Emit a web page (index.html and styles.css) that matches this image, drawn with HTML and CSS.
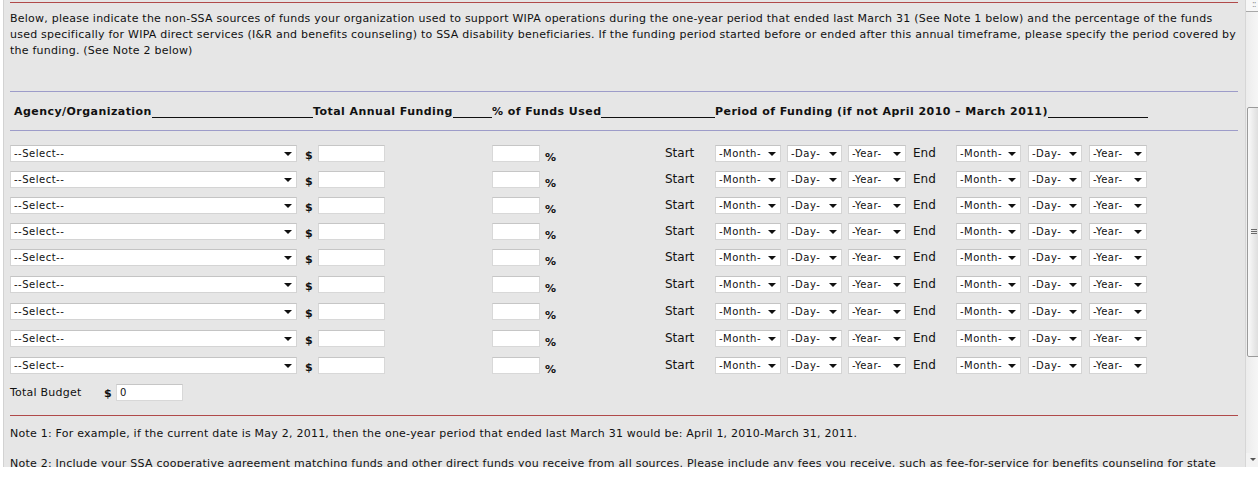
FILE: index.html
```html
<!DOCTYPE html>
<html>
<head>
<meta charset="utf-8">
<link rel="stylesheet" href="styles.css">
</head>
<body>
<div class="page">
  <div class="content">
    <hr class="rule red top">
    <p class="intro">Below, please indicate the non-SSA sources of funds your organization used to support WIPA operations during the one-year period that ended last March 31 (See Note 1 below) and the percentage of the funds used specifically for WIPA direct services (I&amp;R and benefits counseling) to SSA disability beneficiaries. If the funding period started before or ended after this annual timeframe, please specify the period covered by the funding. (See Note 2 below)</p>
    <hr class="rule blue r1">
    <div class="head">
      <div class="hc hc1"><span class="lbl">Agency/Organization</span><span class="fill"></span></div>
      <div class="hc hc2"><span class="lbl">Total Annual Funding</span><span class="fill"></span></div>
      <div class="hc hc3"><span class="lbl">% of Funds Used</span><span class="fill"></span></div>
      <div class="hc hc4"><span class="lbl">Period of Funding (if not April 2010 – March 2011)</span><span class="fill"></span></div>
    </div>
    <hr class="rule blue r2">
    <div class="rows">
      <div class="row">
        <span class="dd w-agency"><select><option>--Select--</option></select></span>
        <span class="cur">$</span>
        <input class="txt w-amt" type="text">
        <input class="txt w-pct" type="text">
        <span class="pc">%</span>
        <span class="lab">Start</span>
        <span class="dd w-m1"><select><option>-Month-</option></select></span>
        <span class="dd w-d1"><select><option>-Day-</option></select></span>
        <span class="dd w-y1"><select><option>-Year-</option></select></span>
        <span class="lab">End</span>
        <span class="dd w-m2"><select><option>-Month-</option></select></span>
        <span class="dd w-d2"><select><option>-Day-</option></select></span>
        <span class="dd w-y2"><select><option>-Year-</option></select></span>
      </div>
      <div class="row">
        <span class="dd w-agency"><select><option>--Select--</option></select></span>
        <span class="cur">$</span>
        <input class="txt w-amt" type="text">
        <input class="txt w-pct" type="text">
        <span class="pc">%</span>
        <span class="lab">Start</span>
        <span class="dd w-m1"><select><option>-Month-</option></select></span>
        <span class="dd w-d1"><select><option>-Day-</option></select></span>
        <span class="dd w-y1"><select><option>-Year-</option></select></span>
        <span class="lab">End</span>
        <span class="dd w-m2"><select><option>-Month-</option></select></span>
        <span class="dd w-d2"><select><option>-Day-</option></select></span>
        <span class="dd w-y2"><select><option>-Year-</option></select></span>
      </div>
      <div class="row">
        <span class="dd w-agency"><select><option>--Select--</option></select></span>
        <span class="cur">$</span>
        <input class="txt w-amt" type="text">
        <input class="txt w-pct" type="text">
        <span class="pc">%</span>
        <span class="lab">Start</span>
        <span class="dd w-m1"><select><option>-Month-</option></select></span>
        <span class="dd w-d1"><select><option>-Day-</option></select></span>
        <span class="dd w-y1"><select><option>-Year-</option></select></span>
        <span class="lab">End</span>
        <span class="dd w-m2"><select><option>-Month-</option></select></span>
        <span class="dd w-d2"><select><option>-Day-</option></select></span>
        <span class="dd w-y2"><select><option>-Year-</option></select></span>
      </div>
      <div class="row">
        <span class="dd w-agency"><select><option>--Select--</option></select></span>
        <span class="cur">$</span>
        <input class="txt w-amt" type="text">
        <input class="txt w-pct" type="text">
        <span class="pc">%</span>
        <span class="lab">Start</span>
        <span class="dd w-m1"><select><option>-Month-</option></select></span>
        <span class="dd w-d1"><select><option>-Day-</option></select></span>
        <span class="dd w-y1"><select><option>-Year-</option></select></span>
        <span class="lab">End</span>
        <span class="dd w-m2"><select><option>-Month-</option></select></span>
        <span class="dd w-d2"><select><option>-Day-</option></select></span>
        <span class="dd w-y2"><select><option>-Year-</option></select></span>
      </div>
      <div class="row">
        <span class="dd w-agency"><select><option>--Select--</option></select></span>
        <span class="cur">$</span>
        <input class="txt w-amt" type="text">
        <input class="txt w-pct" type="text">
        <span class="pc">%</span>
        <span class="lab">Start</span>
        <span class="dd w-m1"><select><option>-Month-</option></select></span>
        <span class="dd w-d1"><select><option>-Day-</option></select></span>
        <span class="dd w-y1"><select><option>-Year-</option></select></span>
        <span class="lab">End</span>
        <span class="dd w-m2"><select><option>-Month-</option></select></span>
        <span class="dd w-d2"><select><option>-Day-</option></select></span>
        <span class="dd w-y2"><select><option>-Year-</option></select></span>
      </div>
      <div class="row">
        <span class="dd w-agency"><select><option>--Select--</option></select></span>
        <span class="cur">$</span>
        <input class="txt w-amt" type="text">
        <input class="txt w-pct" type="text">
        <span class="pc">%</span>
        <span class="lab">Start</span>
        <span class="dd w-m1"><select><option>-Month-</option></select></span>
        <span class="dd w-d1"><select><option>-Day-</option></select></span>
        <span class="dd w-y1"><select><option>-Year-</option></select></span>
        <span class="lab">End</span>
        <span class="dd w-m2"><select><option>-Month-</option></select></span>
        <span class="dd w-d2"><select><option>-Day-</option></select></span>
        <span class="dd w-y2"><select><option>-Year-</option></select></span>
      </div>
      <div class="row">
        <span class="dd w-agency"><select><option>--Select--</option></select></span>
        <span class="cur">$</span>
        <input class="txt w-amt" type="text">
        <input class="txt w-pct" type="text">
        <span class="pc">%</span>
        <span class="lab">Start</span>
        <span class="dd w-m1"><select><option>-Month-</option></select></span>
        <span class="dd w-d1"><select><option>-Day-</option></select></span>
        <span class="dd w-y1"><select><option>-Year-</option></select></span>
        <span class="lab">End</span>
        <span class="dd w-m2"><select><option>-Month-</option></select></span>
        <span class="dd w-d2"><select><option>-Day-</option></select></span>
        <span class="dd w-y2"><select><option>-Year-</option></select></span>
      </div>
      <div class="row">
        <span class="dd w-agency"><select><option>--Select--</option></select></span>
        <span class="cur">$</span>
        <input class="txt w-amt" type="text">
        <input class="txt w-pct" type="text">
        <span class="pc">%</span>
        <span class="lab">Start</span>
        <span class="dd w-m1"><select><option>-Month-</option></select></span>
        <span class="dd w-d1"><select><option>-Day-</option></select></span>
        <span class="dd w-y1"><select><option>-Year-</option></select></span>
        <span class="lab">End</span>
        <span class="dd w-m2"><select><option>-Month-</option></select></span>
        <span class="dd w-d2"><select><option>-Day-</option></select></span>
        <span class="dd w-y2"><select><option>-Year-</option></select></span>
      </div>
      <div class="row">
        <span class="dd w-agency"><select><option>--Select--</option></select></span>
        <span class="cur">$</span>
        <input class="txt w-amt" type="text">
        <input class="txt w-pct" type="text">
        <span class="pc">%</span>
        <span class="lab">Start</span>
        <span class="dd w-m1"><select><option>-Month-</option></select></span>
        <span class="dd w-d1"><select><option>-Day-</option></select></span>
        <span class="dd w-y1"><select><option>-Year-</option></select></span>
        <span class="lab">End</span>
        <span class="dd w-m2"><select><option>-Month-</option></select></span>
        <span class="dd w-d2"><select><option>-Day-</option></select></span>
        <span class="dd w-y2"><select><option>-Year-</option></select></span>
      </div>
    </div>
    <div class="total">
      <span class="tlabel">Total Budget</span>
      <span class="cur tcur">$</span>
      <input class="txt w-amt" type="text" value="0">
    </div>
    <hr class="rule red r3">
    <p class="note n1">Note 1: For example, if the current date is May 2, 2011, then the one-year period that ended last March 31 would be: April 1, 2010-March 31, 2011.</p>
    <p class="note n2">Note 2: Include your SSA cooperative agreement matching funds and other direct funds you receive from all sources. Please include any fees you receive, such as fee-for-service for benefits counseling for state</p>
  </div>
  <div class="scrollbar">
    <div class="sb-top"><span class="sb-dots">::</span></div>
    <div class="sb-track">
      <div class="sb-thumb"><span class="grip"></span></div>
    </div>
    <div class="sb-down"></div>
  </div>
</div>
</body>
</html>
```

FILE: styles.css
```css
html, body {
  margin: 0;
  padding: 0;
  background: #ffffff;
}
body {
  width: 1258px;
  height: 479px;
  overflow: hidden;
  font-family: "DejaVu Sans", Verdana, sans-serif;
  font-size: 11px;
  letter-spacing: 0.23px;
  color: #111111;
}
.page {
  display: flex;
  height: 467px;
  overflow: hidden;
}
.content {
  margin-left: 3px;
  border-left: 1px solid #d2d2d2;
  border-right: 1px solid #d6d6d6;
  width: 1228px;
  padding: 0 7px 0 6px;
  background: #e6e6e6;
  overflow: hidden;
}
.rule {
  border: 0;
  height: 1px;
  margin: 0;
}
.red { background: #b04a4a; }
.blue { background: #9d9cc9; }
.top { margin-top: 2px; }
.intro {
  margin: 8px 0 0 0;
  line-height: 16px;
  height: 50px;
}
.r1 { margin-top: 30px; }
.head {
  display: flex;
  margin-top: 12px;
  height: 16px;
  line-height: 16px;
  font-weight: bold;
  letter-spacing: 0.45px;
  padding-left: 4px;
}
.hc {
  display: flex;
  align-items: flex-start;
  white-space: nowrap;
}
.hc .fill {
  flex: 1;
  min-width: 0;
  height: 1px;
  margin-top: 13px;
  background: #111111;
}
.hc1 { width: 299px; }
.hc2 { width: 179px; }
.hc3 { width: 223px; }
.hc4 { width: 433px; }
.r2 { margin-top: 10px; }
.rows {
  margin-top: 14px;
}
.row {
  display: grid;
  grid-template-columns: 295px 13px 174px 53px 120px 50px 72px 61px 65px 43px 72px 61px 58px;
  height: 26px;
  align-items: start;
}
.row:nth-child(n+5) {
  height: 27px;
}
.dd {
  position: relative;
  display: block;
  height: 17px;
}
.dd select {
  -webkit-appearance: none;
  appearance: none;
  width: 100%;
  height: 17px;
  margin: 0;
  padding: 0 0 0 3px;
  border: 1px solid #d4d4d4;
  border-top-color: #c4c4c4;
  background: #ffffff;
  font-family: "DejaVu Sans", Verdana, sans-serif;
  font-size: 10px;
  letter-spacing: 0.5px;
  color: #111111;
  border-radius: 0;
  outline: none;
}
.dd::after {
  content: "";
  position: absolute;
  right: 5px;
  top: 7px;
  border-left: 4px solid transparent;
  border-right: 4px solid transparent;
  border-top: 4px solid #111111;
  pointer-events: none;
}
.w-agency { width: 287px; }
.w-m1 { width: 66px; }
.w-d1 { width: 55px; }
.w-y1 { width: 58px; }
.w-m2 { width: 65px; }
.w-d2 { width: 54px; }
.w-y2 { width: 58px; }
.txt {
  box-sizing: border-box;
  height: 17px;
  margin: 0;
  padding: 0 0 0 3px;
  border: 1px solid #d8d8d8;
  border-top-color: #c6c6c6;
  background: #ffffff;
  font-family: "DejaVu Sans", Verdana, sans-serif;
  font-size: 10px;
  letter-spacing: 0.3px;
  color: #111111;
  outline: none;
}
.w-amt { width: 67px; }
.w-pct { width: 48px; }
.cur {
  font-weight: bold;
  line-height: 17px;
  padding-top: 2px;
}
.pc {
  font-weight: bold;
  line-height: 17px;
  padding-top: 4px;
  letter-spacing: 1px;
}
.lab {
  font-size: 12px;
  letter-spacing: 0;
  line-height: 17px;
}
.total {
  display: flex;
  align-items: flex-start;
  height: 17px;
}
.tlabel {
  width: 94px;
  line-height: 17px;
}
.tcur {
  width: 12px;
  padding-top: 1px;
}
.r3 { margin-top: 14px; }
.note {
  margin: 0;
  line-height: 16px;
  white-space: nowrap;
}
.n1 { margin-top: 10px; }
.n2 { margin-top: 14px; }
.scrollbar {
  width: 12px;
  height: 467px;
  display: flex;
  flex-direction: column;
  background: #f3f3f3;
  overflow: hidden;
}
.sb-top {
  height: 11px;
  margin-left: -2px;
  border: 1px solid #a8a8a8;
  border-top: 0;
  border-right: 0;
  border-bottom-left-radius: 3px;
  background: #f7f7f7;
  position: relative;
}
.sb-dots {
  position: absolute;
  left: 7px;
  top: 0;
  font-size: 8px;
  line-height: 10px;
  color: #888888;
  letter-spacing: -1px;
}
.sb-track {
  flex: 1;
  position: relative;
  background: linear-gradient(to right, #ececec, #f6f6f6);
}
.sb-thumb {
  position: absolute;
  left: 1px;
  right: -4px;
  top: 95px;
  height: 248px;
  border: 1px solid #9a9a9a;
  border-radius: 2px;
  background: linear-gradient(to right, #fafafa, #e4e4e4 60%, #d8d8d8);
}
.grip {
  position: absolute;
  left: 3px;
  top: 121px;
  width: 6px;
  height: 5px;
  background: repeating-linear-gradient(to bottom, #6a6a6a 0, #6a6a6a 1px, transparent 1px, transparent 2px);
}
.sb-down {
  height: 14px;
  position: relative;
  background: #f3f3f3;
}
.sb-down::after {
  content: "";
  position: absolute;
  left: 4px;
  top: 5px;
  border-left: 3px solid transparent;
  border-right: 3px solid transparent;
  border-top: 3px solid #555555;
}
```
